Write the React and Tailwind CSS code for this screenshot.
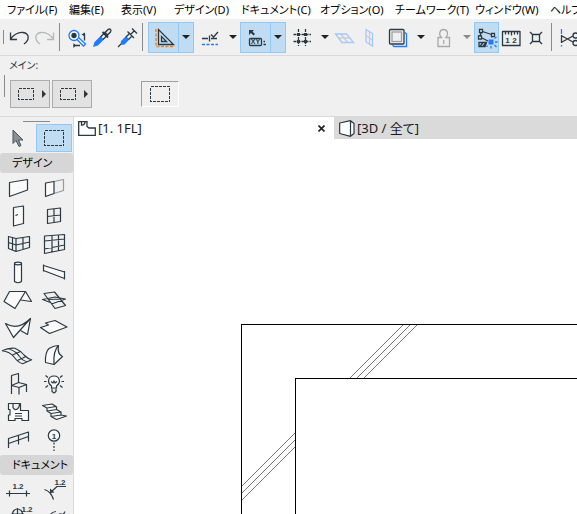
import clsx from 'clsx';

const MENUS = [
  'ファイル(F)',
  '編集(E)',
  '表示(V)',
  'デザイン(D)',
  'ドキュメント(C)',
  'オプション(O)',
  'チームワーク(T)',
  'ウィンドウ(W)',
  'ヘルプ(H)',
];

const BLUE = '#1f7cff';
const ORANGE = '#f58220';

// --- ICON FRAMES ---
const Glyph = ({ className, children }) => (
  <svg
    width="25"
    height="25"
    viewBox="0 0 25 25"
    fill="none"
    stroke="currentColor"
    strokeWidth="1.3"
    className={clsx('shrink-0', className)}
    aria-hidden="true"
  >
    {children}
  </svg>
);

const ToolGlyph = ({ children }) => (
  <svg width="36" height="28" viewBox="0 0 36 28" fill="none" stroke="currentColor" strokeWidth="1.2" strokeLinejoin="round" aria-hidden="true">
    {children}
  </svg>
);

const Num = ({ x, y, size = 8, children }) => (
  <text x={x} y={y} fontSize={size} fontWeight="700" textAnchor="middle" fill="currentColor" stroke="none" className="font-['Liberation_Sans',sans-serif]">
    {children}
  </text>
);

// --- TOOLBAR ICONS ---
const UndoArrow = ({ className }) => (
  <Glyph className={className}>
    <path d="M3.500 7.500V14.500H10M3.500 14C8 8.500 12 7 16 7.500C22.500 8.500 23 14.500 17 19" />
  </Glyph>
);

const FindIcon = () => (
  <Glyph>
    <path d="M12 14.500L18.500 21L20.500 19L14 13" stroke={BLUE} fill="#fff" />
    <circle cx="9" cy="10.500" r="5" stroke={BLUE} fill="#fff" />
    <circle cx="9" cy="10.500" r="2.700" fill="currentColor" stroke="none" />
    <path d="M19.500 9V15.500M8.500 20.500H15" />
    <path d="M16.500 9.500L20 7.500V11.500ZM8.500 18L11 20.500L8.500 23Z" fill="currentColor" stroke="none" />
  </Glyph>
);

const DropperIcon = () => (
  <Glyph>
    <path d="M4 21L5 17.500L10.500 12L13 14.500L7.500 20Z" fill={BLUE} stroke={BLUE} />
    <path d="M10.500 12L15 7.500L17.500 10L13 14.500" />
    <path d="M12.500 7L18 12.500" strokeWidth="1.800" />
    <path d="M15 7.500L18 4.500Q19.500 3.500 20.500 4.500Q21.500 5.500 20.500 7L17.500 10Z" fill="#dfe3e6" />
  </Glyph>
);

const SyringeIcon = () => (
  <Glyph>
    <path d="M3 22L7 18" />
    <path d="M6.500 16.500L11 12L13.500 14.500L9 19H6.500Z" fill={BLUE} stroke={BLUE} />
    <path d="M11 12L14.500 8.500L17 11L13.500 14.500M12.500 6.500L19 13M15.500 9.500L19.500 5.500M17 3.500L22 8.500" />
  </Glyph>
);

const SetSquareIcon = () => (
  <Glyph>
    <path d="M5 4V21.500H23" stroke={ORANGE} strokeWidth="1.500" strokeDasharray="3 1.500" />
    <path d="M7.500 4.500V19.500H22.500ZM10.500 11.500V16.500H15.500Z" />
  </Glyph>
);

const GuideIcon = () => (
  <Glyph>
    <path d="M5 13.500H11M14 13.500H20M12.500 10.500V16.500M14 9.500L16.500 12L21 7" />
    <path d="M5 19.500H21" stroke={BLUE} strokeDasharray="3 1.500" />
  </Glyph>
);

const TrackerIcon = () => (
  <Glyph>
    <path d="M6 5H11L9.500 6.500L12 9L10.500 10.500L8 8L6 10Z" fill="currentColor" stroke="none" />
    <rect x="6.500" y="13.500" width="12" height="7" rx="1" />
    <Num x="12.500" y="19.300" size={7}>XY</Num>
    <path d="M20.500 16.500H22M20.500 19.500H23" />
  </Glyph>
);

const GridIcon = () => (
  <Glyph>
    <path d="M9.500 4V21M16.500 4V21M4.500 9.500H22M4.500 16.500H22" strokeDasharray="3 1" />
    <path d="M8 8H11V11H8ZM15 8H18V11H15ZM8 15H11V18H8ZM15 15H18V18H15Z" fill="currentColor" stroke="none" />
  </Glyph>
);

const FloorPlaneIcon = () => (
  <Glyph className="text-[#a4c8fb]">
    <path d="M7 13H18M9 9L15.500 17.500" stroke="#c9cdd2" />
    <path d="M3.500 9H14.500L21.500 17.500H10Z" />
  </Glyph>
);

const WallPlaneIcon = () => (
  <Glyph className="text-[#a4c8fb]">
    <path d="M12.500 6.500V19M9 10.500L15.500 15" stroke="#c9cdd2" />
    <path d="M9 4.500L15.500 8.500V21L9 17Z" />
  </Glyph>
);

const TraceIcon = () => (
  <Glyph>
    <path d="M20 7.500L21.500 9V21.500H9L7.500 20" stroke={BLUE} />
    <rect x="4.500" y="4.500" width="14.500" height="14.500" rx="1" />
    <rect x="7" y="7" width="9.500" height="9.500" stroke="#9aa0a5" />
  </Glyph>
);

const WeightIcon = () => (
  <Glyph className="text-[#a9a9a9]">
    <path d="M10.500 12.500C7 9 9 4.500 12.700 4.500S18 9 15 12.500H18.500V21.500H7V12.500Z" />
    <path d="M12.700 15V19" />
  </Glyph>
);

const SnapIcon = () => (
  <Glyph>
    <path d="M8.500 6.500L17.500 9.500M7 7.500L6 11.500M8 13L14 16M17 12L19 11" />
    <path d="M5.500 4.500H8.500V7.500H5.500ZM17.500 8.500H20.500V11.500H17.500ZM4.500 11H7.500V14H4.500Z" fill="#fff" />
    <path d="M5 17.500H12.500L11 21.500H5ZM6 21.500L9 17.500M9 21.500L12 17.500" />
    <path d="M14.500 14.500H19.500V19.500H14.500Z" fill={BLUE} stroke="none" />
    <path d="M20.500 13.500L22.500 12M21 17H23.500M20.500 20L22.500 22M17 21V23.500M13.500 20.500L12.500 22" stroke={BLUE} />
  </Glyph>
);

const RulerIcon = () => (
  <Glyph>
    <path d="M3.500 6V20.500H21V6M3.500 6.500H21M6.500 6.500V9.500M9.500 6.500V9.500M12.500 6.500V10.500M15.500 6.500V9.500M18.500 6.500V9.500" />
    <Num x="8.500" y="18" size={8}>1</Num>
    <Num x="15.500" y="18" size={8}>2</Num>
  </Glyph>
);

const IntersectIcon = () => (
  <Glyph>
    <path d="M8.500 9.500H15.500V16.500H8.500ZM8.500 9.500L6 7M15.500 9.500L18 7M8.500 16.500L6 19M15.500 16.500L18 19" />
  </Glyph>
);

const ScissorsIcon = () => (
  <Glyph>
    <path d="M4.500 4V9M4.500 20V21.500" stroke={BLUE} />
    <path d="M4.500 10V18M5 11L16 17M5 17L16 11" />
    <circle cx="18.500" cy="10.500" r="2.500" />
    <circle cx="18.500" cy="18" r="2.500" />
  </Glyph>
);

// --- TOOLBAR PARTS ---
const BarButton = ({ label, wide, active, children }) => (
  <button
    type="button"
    aria-label={label}
    className={clsx(
      'flex h-[31px] shrink-0 items-center justify-center border',
      wide ? 'w-[31px]' : 'w-[25px]',
      active ? 'border-[#90c8f6] bg-[#c0dcf3]' : 'border-transparent',
    )}
  >
    {children}
  </button>
);

const Drop = ({ label, active, faded }) => (
  <button
    type="button"
    aria-label={label}
    className={clsx(
      'flex h-[31px] w-[15px] shrink-0 items-center justify-center border',
      active ? 'border-l-0 border-[#90c8f6] bg-[#c0dcf3]' : 'border-transparent',
      faded ? 'text-[#8a8a8a]' : 'text-[#222]',
    )}
  >
    <svg width="8" height="4" viewBox="0 0 8 4" fill="currentColor" aria-hidden="true">
      <path d="M0 0H8L4 4Z" />
    </svg>
  </button>
);

const Divider = () => <div className="mr-[5px] ml-[2px] h-7 w-px shrink-0 bg-[#8a8a8a]" />;

const Toolbar = () => (
  <div className="flex h-[37px] shrink-0 items-center overflow-hidden border-b border-[#d9d9d9] bg-[#f0f0f0]">
    <div className="flex w-[7px] shrink-0 justify-center">
      <div className="h-3.5 w-px bg-[#8a8a8a]" />
    </div>
    <BarButton label="元に戻す"><UndoArrow /></BarButton>
    <BarButton label="やり直し"><UndoArrow className="-scale-x-100 text-[#b4b8bb]" /></BarButton>
    <Divider />
    <BarButton label="検索"><FindIcon /></BarButton>
    <BarButton label="取得"><DropperIcon /></BarButton>
    <BarButton label="転送"><SyringeIcon /></BarButton>
    <Divider />
    <BarButton label="ガイド線" wide active><SetSquareIcon /></BarButton>
    <Drop label="ガイド線オプション" active />
    <BarButton label="スナップガイド" wide><GuideIcon /></BarButton>
    <Drop label="スナップガイドオプション" />
    <BarButton label="座標" wide active><TrackerIcon /></BarButton>
    <Drop label="座標オプション" active />
    <BarButton label="グリッド" wide><GridIcon /></BarButton>
    <Drop label="グリッドオプション" />
    <BarButton label="水平面"><FloorPlaneIcon /></BarButton>
    <BarButton label="垂直面"><WallPlaneIcon /></BarButton>
    <BarButton label="参照" wide><TraceIcon /></BarButton>
    <Drop label="参照オプション" />
    <BarButton label="重力" wide><WeightIcon /></BarButton>
    <Drop label="重力オプション" faded />
    <BarButton label="要素スナップ" active><SnapIcon /></BarButton>
    <BarButton label="寸法"><RulerIcon /></BarButton>
    <BarButton label="交点"><IntersectIcon /></BarButton>
    <Divider />
    <BarButton label="切断"><ScissorsIcon /></BarButton>
  </div>
);

// --- INFO BOX ---
const Marquee = ({ width = 16, height = 12 }) => (
  <svg width={width} height={height} fill="none" stroke="currentColor" strokeWidth="1" strokeDasharray="3 1" shapeRendering="crispEdges" aria-hidden="true">
    <rect x="0.500" y="0.500" width={width - 1} height={height - 1} />
  </svg>
);

const MethodButton = ({ label }) => (
  <button type="button" aria-label={label} className="flex h-7 w-10 items-center gap-2 border border-[#acacac] bg-[#e2e2e2] pl-[7px]">
    <Marquee />
    <svg width="4" height="8" viewBox="0 0 4 8" fill="#333" aria-hidden="true">
      <path d="M0 0L4 4L0 8Z" />
    </svg>
  </button>
);

const InfoBox = () => (
  <div className="h-[61px] shrink-0 border-b border-[#d9d9d9] bg-[#f0f0f0]">
    <div className="h-[19px] pt-0.5 pl-[9px] text-[10px] leading-[14px] [font-feature-settings:'palt']">メイン:</div>
    <div className="flex">
      <div className="mr-[5px] ml-1 h-[22px] w-px bg-[#8a8a8a]" />
      <div className="flex gap-0.5 pt-[5px]">
        <MethodButton label="選択方法" />
        <MethodButton label="形状" />
      </div>
      <button type="button" aria-label="矩形選択" className="mt-[6px] ml-[49px] flex h-[26px] w-[38px] items-center justify-center border border-t-[#a0a0a0] border-r-white border-b-white border-l-[#a0a0a0]">
        <Marquee width={20} height={16} />
      </button>
    </div>
  </div>
);

// --- PALETTE ---
const DESIGN_TOOLS = [
  ['壁', <path d="M9.500 8.500L27.500 5.500V16L9.500 22.500Z" fill="#fafafa" />],
  ['ドアウィンドウ壁', (
    <>
      <path d="M18 7.500L27.500 5.500V16.500L18 19.500" stroke="#9a9a9a" />
      <path d="M9.500 9L18 7.500V19.500L9.500 22.500Z" fill="#fafafa" />
    </>
  )],
  ['ドア', <><path d="M13.500 5.500L23.500 4V21.500L13.500 24Z" fill="#fafafa" /><path d="M15.500 13.500L18 12.500" /></>],
  ['窓', <path d="M11.500 7.500L24.500 6V19.500L11.500 21.500ZM18 7V20.500M11.500 14.500L24.500 13" />],
  ['コーナー窓', <path d="M8.500 6.500L16 8.500L29.500 6.500V17.500L16 21.500L8.500 18.500ZM8.500 12.500L16 15L29.500 12M16 8.500V21.500M12.500 7.500V20M23 7.500V19.500" />],
  ['カーテンウォール', <path d="M8.500 6L28.500 4.500V19.500L8.500 23.500ZM16 5.500V22M22.500 5V20.500M8.500 11L28.500 9M8.500 19L28.500 15" />],
  ['柱', <><path d="M14.500 5.500V23.500Q18 26 21.500 23.500V5.500" fill="#fafafa" /><ellipse cx="18" cy="5.500" rx="3.500" ry="1.300" /></>],
  ['梁', <path d="M7.500 7.500L28.500 14V20.500L7.500 12.500ZM7.500 6.500V13.500M28.500 13V21.500" fill="#fafafa" />],
  ['屋根', (
    <>
      <path d="M25.500 5.500L31.500 15.500L20.500 14" fill="#fafafa" />
      <path d="M9.500 5.500H25.500L15 22.500L4 15.500Z" fill="#fafafa" />
    </>
  )],
  ['多層スラブ', <path d="M8 7.500L18.500 6L29.500 19.500L19 22.500ZM6.500 13.500L19 11L29.500 13L17 17.500ZM12.500 13.500L24 13" />],
  ['シェル', (
    <>
      <path d="M30.500 4.500L27.500 20.500L20.500 16.500" fill="#fafafa" />
      <path d="M5.500 9.500Q18 17 30.500 4.500L13.500 23.500Z" fill="#fafafa" />
    </>
  )],
  ['スラブ', <path d="M4.500 13.500L12.500 11L9.500 9L19 6.500L31 13L13.500 19.500Z" fill="#fafafa" />],
  ['メッシュ', <path d="M2 8.700Q9 5.500 15 6.300Q21 9 24 13Q28 17 31.700 17.700L22.700 21.700Q18 20.500 14 15Q10 9.500 2 8.700M8.500 6.700Q16 9 19.500 14.500Q23 19 27.500 19.700M12.500 13L20.500 9.500M17.500 18.500L26 14.500" strokeWidth="1.100" />],
  ['モルフ', (
    <>
      <path d="M9.500 20.500Q9 10 13 6.500Q18 3.500 22.500 3.500Q21 12 26.500 14.500L18 22.500Z" fill="#fafafa" />
      <path d="M22.500 3.500Q17 9 18 22.500" />
    </>
  )],
  ['オブジェクト', <path d="M11.500 24V5.500L18.500 3.500V12.500L26.500 14.500L19 17.500L11.500 15.500L18.500 12.500M19 17.500V24.500M26.500 14.500V22" />],
  ['ランプ', (
    <>
      <path d="M15.500 18V16Q12.500 14 12.500 11Q13 6 18 6T23.500 11Q23.500 14 20.500 16V18Z" fill="#fafafa" />
      <path d="M16 18.500V21.500L18 23L20 21.500V18.500M15 11.500L17 13L18 11L19 13L21 11.500M8 11.500H10.500M25.500 11.500H28M9.500 5.500L12 7.500M26.500 5.500L24 7.500M9.500 17.500L12 15.500M26.500 17.500L24 15.500" />
    </>
  )],
  ['ゾーン', <><path d="M8.500 5.500H13V9.500Q14 12 16.500 11.500Q19.500 10 19.500 5.500H20.500V12.500H28.500V22.500H22V20.500H15V22.500H8.500V17H10V11.500H8.500ZM13 5.500H19.500" fill="#fafafa" /><path d="M15 15.500H22M15 18H22" /></>],
  ['階段', <path d="M6.500 7.500L16 6L20 8.500L11 10ZM11 10V13L20.500 11.500V8.500M11 13L15 15.500L25 14L20.500 11.500M15 15.500V18.500L25 17V14M15 18.500L20.500 21.500L30.500 18L25 17" fill="#fafafa" />],
  ['手摺り', <path d="M8.500 22V12.500L28.500 6V15.500M8.500 17.500L28.500 10.500M18.500 9.500V18.500" />],
  ['通り芯', <><circle cx="18" cy="9.500" r="5.700" fill="#fafafa" /><Num x="18" y="12.500">1</Num><path d="M18 16.500V25" strokeDasharray="2 1.500" /></>],
];

const DOCUMENT_TOOLS = [
  ['寸法線', <><Num x="18" y="12.500" size={8}>1.2</Num><path d="M6 17.500H30M9.500 14.500V20.500M26.500 14.500V20.500" /></>],
  ['半径寸法', (
    <>
      <Num x="24" y="8.500" size={8}>1.2</Num>
      <path d="M30 10.500H21L15 16M8.500 13.500Q15 15.500 17.500 23.500" />
      <path d="M14 17V12.500L18.500 16.500Z" fill="currentColor" stroke="none" />
    </>
  )],
  ['高さ寸法', <><circle cx="17.500" cy="10" r="5" /><path d="M17.500 4V16M11 10H24" /><Num x="27" y="8" size={8}>1.2</Num></>],
  ['角度寸法', <><path d="M13 13Q15 8 20 7.500" /><path d="M29 7.500Q25 15 23.500 11.500T29 11.500" /></>],
];

const ToolGrid = ({ tools }) => (
  <div className="grid grid-cols-[36px_36px]">
    {tools.map(([name, art]) => (
      <button key={name} type="button" aria-label={name} className="h-7">
        <ToolGlyph>{art}</ToolGlyph>
      </button>
    ))}
  </div>
);

const GroupTitle = ({ children }) => (
  <h2 className="my-px h-5 rounded-[3px] bg-[#d6d6d6] pl-3 text-[11px] leading-5 whitespace-nowrap text-black [font-feature-settings:'palt']">{children}</h2>
);

const Palette = () => (
  <aside className="w-[74px] shrink-0 overflow-hidden border-r border-[#d9d9d9] bg-[#f0f0f0] pt-1">
    <div className="mx-auto h-px w-[27px] bg-[#8a8a8a]" />
    <div className="mt-0.5 grid grid-cols-[36px_36px]">
      <button type="button" aria-label="矢印" className="flex h-7 items-center justify-center">
        <svg width="12" height="19" viewBox="0 0 12 19" fill="#8b8f93" stroke="#4a555c" aria-hidden="true">
          <path d="M1 1V14.500L4 11.500L7 17.500L9 16.500L6.500 11H11Z" />
        </svg>
      </button>
      <button type="button" aria-label="矩形選択" aria-pressed="true" className="flex h-7 items-center justify-center border border-[#90c8f6] bg-[#c0dcf3]">
        <Marquee width={20} height={16} />
      </button>
    </div>
    <GroupTitle>デザイン</GroupTitle>
    <ToolGrid tools={DESIGN_TOOLS} />
    <GroupTitle>ドキュメント</GroupTitle>
    <ToolGrid tools={DOCUMENT_TOOLS} />
  </aside>
);

// --- DRAWING AREA ---
const Tabs = () => (
  <div role="tablist" className="flex h-[22px] shrink-0 bg-[#dadada] text-[13px] leading-[22px] text-[#1a1a1a] [font-feature-settings:'palt']">
    <div className="flex w-[260px] shrink-0 items-center bg-white pl-1">
      <button type="button" role="tab" aria-selected="true" className="flex flex-1 items-center gap-0.5">
        <svg width="18" height="15" viewBox="0 0 18 15" fill="#fff" stroke="#2b3a42" strokeWidth="1.300" aria-hidden="true">
          <path d="M0.700 0.700H9V5.500L11 7H17.300V14.300H0.700ZM3.500 0.700V4Q7 4 7 0.700" />
        </svg>
        [1. 1FL]
      </button>
      <button type="button" aria-label="閉じる" className="flex w-[26px] items-center justify-center">
        <svg width="7" height="7" viewBox="0 0 7 7" stroke="#222" strokeWidth="1.600" aria-hidden="true">
          <path d="M0.500 0.500L6.500 6.500M6.500 0.500L0.500 6.500" />
        </svg>
      </button>
    </div>
    <button type="button" role="tab" aria-selected="false" className="flex items-center gap-0.5 pl-[5px] whitespace-nowrap">
      <svg width="16" height="17" viewBox="0 0 16 17" fill="#fff" stroke="#2b3a42" strokeWidth="1.200" strokeLinejoin="round" aria-hidden="true">
        <path d="M0.700 3L11.500 0.700L15 3.500V13.500L11.500 16.300L0.700 13.500ZM11.500 0.700V16.300" />
      </svg>
      [3D / 全て]
    </button>
  </div>
);

const FloorPlan = () => (
  <svg className="block h-full w-full" fill="none" stroke="#000" strokeWidth="1" aria-hidden="true">
    <path d="M3000 185.500H167.500V3000M3000 239.500H221.500V3000" shapeRendering="crispEdges" />
    <path
      d="M329 186L276 239M336 186L283 239M343 186L290 239M221 294L168 347M221 301L168 354M221 308L168 361"
      stroke="#777"
    />
  </svg>
);

export default function App() {
  return (
    <div className="flex h-screen flex-col overflow-hidden bg-white font-['Noto_Sans','Noto_Sans_CJK_JP',sans-serif] text-[#2b3a42]">
      <nav className="grid h-[19px] shrink-0 grid-cols-[62px_52px_53px_67px_79px_75px_80px_75px_auto] justify-start overflow-hidden pl-[7px] text-left text-[11px] leading-[20px] whitespace-nowrap text-black [font-feature-settings:'palt']">
        {MENUS.map((name) => (
          <button key={name} type="button" className="text-left">{name}</button>
        ))}
      </nav>
      <Toolbar />
      <InfoBox />
      <div className="flex min-h-0 flex-1">
        <Palette />
        <main className="flex min-w-0 flex-1 flex-col">
          <Tabs />
          <div className="min-h-0 flex-1 overflow-hidden">
            <FloorPlan />
          </div>
        </main>
      </div>
    </div>
  );
}
